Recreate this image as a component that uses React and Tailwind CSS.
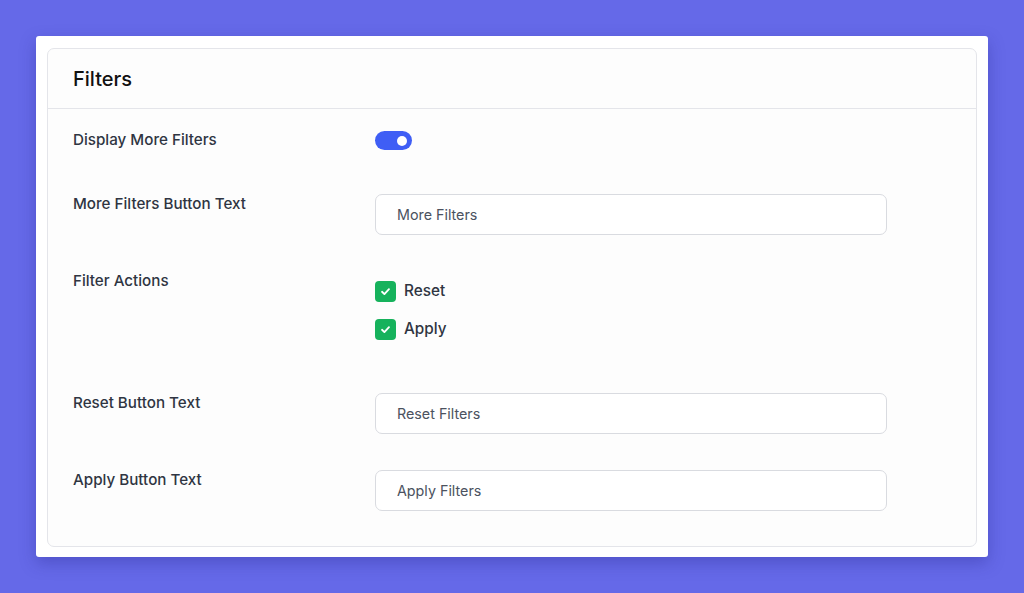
import React, { useState } from "react";

const Toggle = ({ on, onChange }) => (
    <button
        type="button"
        onClick={() => onChange(!on)}
        className={`mt-[2px] flex h-[19px] w-[37px] items-center rounded-full px-[5px] ${on ? "justify-end bg-[#3f5ef5]" : "justify-start bg-gray-300"}`}
    >
        <span className="block h-[10px] w-[10px] rounded-full bg-white" />
    </button>
);

const Check = ({ label, checked, onChange }) => (
    <label className="flex cursor-pointer items-center gap-[8px]">
        <span
            onClick={() => onChange(!checked)}
            className={`flex h-[21px] w-[21px] items-center justify-center rounded-[4px] ${checked ? "bg-[#16b25c]" : "border border-gray-300 bg-white"}`}
        >
            {checked && (
                <svg width="11" height="11" viewBox="0 0 12 12" fill="none">
                    <path d="M2.2 6.3 4.8 8.8 9.8 3.4" stroke="white" strokeWidth="2" strokeLinecap="round" strokeLinejoin="round" />
                </svg>
            )}
        </span>
        <span className="text-[15.3px] font-medium text-[#2f3542]">{label}</span>
    </label>
);

const TextField = ({ value, onChange }) => (
    <input
        type="text"
        value={value}
        onChange={(e) => onChange(e.target.value)}
        className="mt-[1px] h-[41px] w-[512px] rounded-[7px] border border-[#d9dbe0] bg-white px-[21px] text-[14.3px] text-[#4b5260] focus:outline-none"
    />
);

const Row = ({ label, children, className = "" }) => (
    <div className={`flex ${className}`}>
        <div className="w-[302px] shrink-0 text-[15.2px] font-medium leading-[22px] text-[#2f3542]">
            {label}
        </div>
        <div>{children}</div>
    </div>
);

export default function App() {
    const [more, setMore] = useState(true);
    const [moreText, setMoreText] = useState("More Filters");
    const [reset, setReset] = useState(true);
    const [apply, setApply] = useState(true);
    const [resetText, setResetText] = useState("Reset Filters");
    const [applyText, setApplyText] = useState("Apply Filters");

    return (
        <div
            className="h-[593px] w-[1024px] bg-[#6569e8] pt-[36px] pl-[36px]"
            style={{ fontFamily: "Inter, 'Noto Sans', sans-serif" }}
        >
            <div className="h-[521px] w-[952px] rounded-[3px] bg-white px-[11px] pt-[12px] pb-[10px] shadow-[0_6px_16px_rgba(40,40,140,0.35)]">
                <div className="h-[499px] w-[930px] rounded-[7px] border border-[#e4e5ea] bg-[#fdfdfd]">
                    <div className="flex h-[60px] items-center border-b border-[#e4e5ea] px-[25px]">
                        <h2 className="text-[20px] font-medium text-[#111111]">Filters</h2>
                    </div>
                    <div className="px-[25px] pt-[20px]">
                        <Row label="Display More Filters">
                            <Toggle on={more} onChange={setMore} />
                        </Row>
                        <Row label="More Filters Button Text" className="mt-[42px]">
                            <TextField value={moreText} onChange={setMoreText} />
                        </Row>
                        <Row label="Filter Actions" className="mt-[35px]">
                            <div className="mt-[10px] flex flex-col gap-[15px]">
                                <Check label="Reset" checked={reset} onChange={setReset} />
                                <Check label="Apply" checked={apply} onChange={setApply} />
                            </div>
                        </Row>
                        <Row label="Reset Button Text" className="mt-[51px]">
                            <TextField value={resetText} onChange={setResetText} />
                        </Row>
                        <Row label="Apply Button Text" className="mt-[35px]">
                            <TextField value={applyText} onChange={setApplyText} />
                        </Row>
                    </div>
                </div>
            </div>
        </div>
    );
}
